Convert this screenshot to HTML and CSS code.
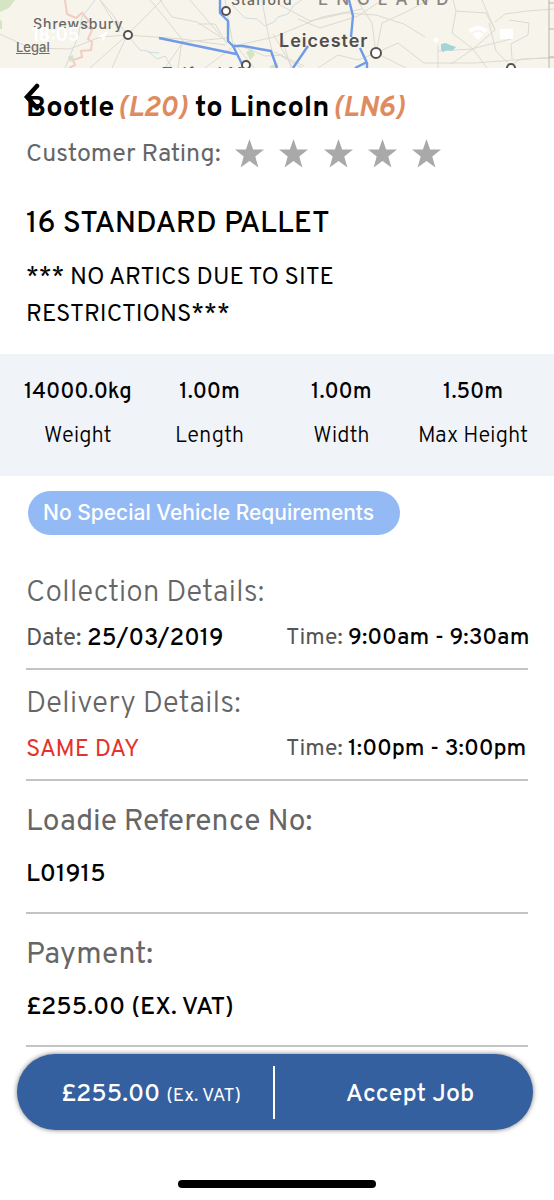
FILE: index.html
```html
<!DOCTYPE html>
<html lang="en">
<head>
<meta charset="utf-8">
<meta name="viewport" content="width=device-width, initial-scale=1">
<title>Job details</title>
<link rel="stylesheet" href="styles.css">
</head>
<body>
<header class="map">
  <svg class="map-art" viewBox="0 0 554 68" preserveAspectRatio="xMidYMid slice" aria-label="Route map">
    <rect width="554" height="68" fill="#f7f4ec"/>
    <g fill="#d5e5c4">
      <path d="M0 0h15l-6 8-9 4zM0 19l2 3v7H0zM246 52l6-3 3 6-5 5zM68 57l5-2 1 5-4 2zM270 66l8-3v5h-8z"/>
    </g>
    <g fill="none" stroke="#f1cdc5" stroke-width="2">
      <path d="M65 0l2 14 9 4 6-5 7 8-5 4 8 5-4 9 4 3-1 8-10 1 1 6-9 3 2 5-6 3"/>
    </g>
    <g fill="none" stroke="#cddde0" stroke-width="1">
      <path d="M95 0L82 17l-4 20-6 14-7 17M130 38l10 12 8 1 9 8 8-3 7 12M232 5l13 13 12 1 8 7 9-4 4-5 10-3 6-9 8-5M148 52l11 1"/>
    </g>
    <g fill="none" stroke="#dcdad0" stroke-width="1">
      <path d="M0 34l30 14 40 1 30-12 27-2M127 35l-14-20-13-15M127 35l35-35M127 35l-15 33M127 35l-37 33M127 35l55 4 43 6M100 0l20 32M150 0l20 24 14 18M160 0l12 17 25 5 28 18M165 68l18-26 44-4M178 68l4-27M190 0l30 35M198 24h17l12 20M225 0l8 45M205 68l29-22 40-9 48-20 40-8M234 43l20 25M238 45l27 11 18-1M262 0l6 34 8 34M273 34l20 34M281 56l21 12M274 52l30 14M282 38l9 30M298 19l22 9 38-12 24-16M280 5l30 16 36-8 30 2 28 9 21 13M376 53l-4-30-15-23M376 53l6-30 22-10 25-13M376 53l22-10 26 20 50 0 80-6M376 53l-18 7-20-5-20 13M376 53l30 15M453 0l3 11 30 2 9 17-22 19 14 19M456 11l-4 22 21 16M495 30l-13-30M495 22l10-8 22-3 27-2M489 23l7 28 15 15M473 49l-35 2M473 49l-22 15M438 45v23M509 20l20 3-1 12-17 9 1 15M511 65l10-6 33-1M471 49l40-10"/>
    </g>
    <path d="M549 0v68M549 3h5M549 29h5M549 57h5" fill="none" stroke="#b5b4af"/>
    <path d="M441 44l5-1 4 2 6 2-4 4-5-1-4 2-2-2z" fill="#a2d4d8"/>
    <g fill="none" stroke="#6f9be8" stroke-width="2.400" stroke-linejoin="round">
      <path d="M159 38l77 16M220 0v13l8 8v20l5 5h10l28 5 6 17M233 46l11 22M349 0l4 16-2 21M308 46l-15 22M360 48l7 15v5M367 62l-12 6"/>
    </g>
    <g fill="#fff" stroke="#55534f" stroke-width="2">
      <circle cx="128" cy="35" r="4"/><circle cx="226" cy="11" r="4"/><circle cx="246" cy="65" r="4"/><circle cx="376" cy="53" r="5"/><circle cx="511" cy="68" r="4"/>
    </g>
    <g class="map-label">
      <text x="33" y="29" font-size="14">Shrewsbury</text>
      <text x="231" y="5" font-size="14">Stafford</text>
      <text class="map-city" x="279" y="47" font-size="18">Leicester</text>
      <text class="map-country" x="318" y="5" font-size="17">ENGLAND</text>
      <text x="162" y="79" font-size="16">Telford Mo</text>
    </g>
    <g fill="#fff">
      <text class="clock" x="31" y="41" font-size="18">18:05</text>
      <path d="M97 37l11-6-5 11-1-5zM434 38h4v4h-4zM500 29h13v10h-13z"/>
      <path d="M468 30q10-8 20 0l-3 3q-7-6-14 0zM472 34q6-4 12 0l-6 6z"/>
    </g>
  </svg>
  <a class="legal" href="#legal">Legal</a>
</header>
<main class="job">
  <section class="summary">
    <button class="back" type="button" aria-label="Back">
      <svg viewBox="0 0 20 30" width="20" height="30"><path d="M16 5L6 16l10 11" fill="none" stroke="#000" stroke-width="4.500" stroke-linecap="round"/></svg>
    </button>
    <h1 class="route">Bootle<em>(L20)</em> to Lincoln<em>(LN6)</em></h1>
    <div class="rating">
      <span>Customer Rating:</span>
      <svg class="stars" viewBox="0 0 206 29" width="206" height="29" role="img" aria-label="No rating">
        <defs><path id="star" d="M14.500 0l3.600 10.600H29l-8.700 6.800 3.100 11L14.500 22l-8.900 6.400 3.100-11L0 10.600h10.900z"/></defs>
        <g fill="#a9a9a9"><use href="#star"/><use href="#star" x="44"/><use href="#star" x="89"/><use href="#star" x="133"/><use href="#star" x="177"/></g>
      </svg>
    </div>
    <h2 class="load">16 STANDARD PALLET</h2>
    <p class="note">*** NO ARTICS DUE TO SITE RESTRICTIONS***</p>
  </section>
  <dl class="stats">
    <div><dd>14000.0kg</dd><dt>Weight</dt></div>
    <div><dd>1.00m</dd><dt>Length</dt></div>
    <div><dd>1.00m</dd><dt>Width</dt></div>
    <div><dd>1.50m</dd><dt>Max Height</dt></div>
  </dl>
  <div class="details">
    <p class="pill">No Special Vehicle Requirements</p>
    <section class="slot">
      <h3>Collection Details:</h3>
      <div class="when"><p class="day">Date: <b>25/03/2019</b></p><p>Time: <b>9:00am - 9:30am</b></p></div>
    </section>
    <section class="slot">
      <h3>Delivery Details:</h3>
      <div class="when"><p class="day urgent">SAME DAY</p><p>Time: <b>1:00pm - 3:00pm</b></p></div>
    </section>
    <section class="fact">
      <h3>Loadie Reference No:</h3>
      <p>L01915</p>
    </section>
    <section class="fact">
      <h3>Payment:</h3>
      <p>£255.00 (EX. VAT)</p>
    </section>
  </div>
</main>
<footer class="dock">
  <button class="accept" type="button">
    <span class="price">£255.00 <small>(Ex. VAT)</small></span>
    <span class="action">Accept Job</span>
  </button>
  <div class="home"></div>
</footer>
</body>
</html>
```
FILE: styles.css
```css
* { box-sizing: border-box; }
body, h1, h2, h3, p, dl, dd { margin: 0; }
body {
  background: #fff;
  color: #000;
  font-family: Overpass, Roboto, "Liberation Sans", sans-serif;
  font-size: 23px;
  line-height: 32px;
}
button { border: 0; padding: 0; font: inherit; cursor: pointer; }

.map { position: relative; height: 68px; overflow: hidden; }
.map-art { display: block; width: 100%; height: 100%; }
.map-label { fill: #686662; font-family: Inter, sans-serif; font-weight: 500; letter-spacing: 1px; }
.map-city { fill: #504f4c; font-weight: 600; }
.map-country { fill: #88857f; letter-spacing: 8px; }
.clock { font-family: Inter, sans-serif; font-weight: 600; }
.legal {
  position: absolute;
  left: 16px;
  top: 39px;
  color: #706e69;
  font: 500 13px/16px Inter, sans-serif;
}

.summary { position: relative; padding: 21px 26px 20px; }
.back { position: absolute; left: 21px; top: 13px; background: none; line-height: 0; }
.route { font-size: 29px; line-height: 40px; font-weight: 700; }
.route em { margin-left: 3px; color: #df8b60; }
.rating { display: flex; align-items: center; gap: 14px; padding-top: 6px; color: #666; font-size: 25px; }
.rating span { padding-top: 2px; line-height: 36px; }
.stars { margin-bottom: 2px; }
.load { padding-top: 32px; font-size: 30px; line-height: 40px; font-weight: 500; }
.note { padding-top: 15px; max-width: 360px; font-size: 24px; line-height: 37px; }

.stats {
  display: grid;
  grid-template-columns: repeat(4, 1fr);
  padding: 23px 15px 23px 12px;
  background: #f0f3f8;
  text-align: center;
}
.stats div { display: flex; flex-direction: column; gap: 12px; white-space: nowrap; }
.stats dd, .stats dt { font-size: 22px; }
.stats dd { font-weight: 500; }
.stats dt { font-weight: 300; }

.details { padding: 15px 26px 0; }
.pill {
  width: fit-content;
  margin-left: 2px;
  padding: 6px 26px 6px 15px;
  border-radius: 22px;
  background: #94baf6;
  color: #fff;
  font: 500 21px/32px Inter, sans-serif;
}
h3 { color: #666; font-size: 30px; line-height: 40px; font-weight: 400; }
.slot { border-bottom: 2px solid #c4c4c4; padding: 15px 0 13px; }
.slot h3 { font-weight: 300; }
.pill + .slot { padding-top: 39px; }
.when { display: grid; grid-template-columns: 260px 1fr; padding-top: 9px; color: #555; white-space: nowrap; }
.when b { color: #000; font-weight: 500; }
.when .day { font-size: 24px; }
.when .urgent { color: #e4332a; }
.fact { border-bottom: 2px solid #c4c4c4; padding: 22px 0 21px; }
.fact p { padding-top: 16px; font-size: 25px; font-weight: 500; }

.dock { padding: 7px 17px 12px; }
.accept {
  display: grid;
  grid-template-columns: 1fr 1fr;
  align-items: center;
  width: calc(100% - 4px);
  min-height: 76px;
  border-radius: 38px;
  background: #35609f;
  box-shadow: 0 0 5px #777;
  color: #fff;
  font-size: 25px;
  font-weight: 500;
}
.accept span { padding-top: 6px; line-height: 46px; }
.accept .price { border-right: 2px solid #fff; padding-left: 12px; }
.price small { font-size: 19px; font-weight: 400; }
.accept .action { padding-left: 12px; }
.home { width: 198px; height: 8px; margin: 50px auto 0; border-radius: 4px; background: #000; }
```
